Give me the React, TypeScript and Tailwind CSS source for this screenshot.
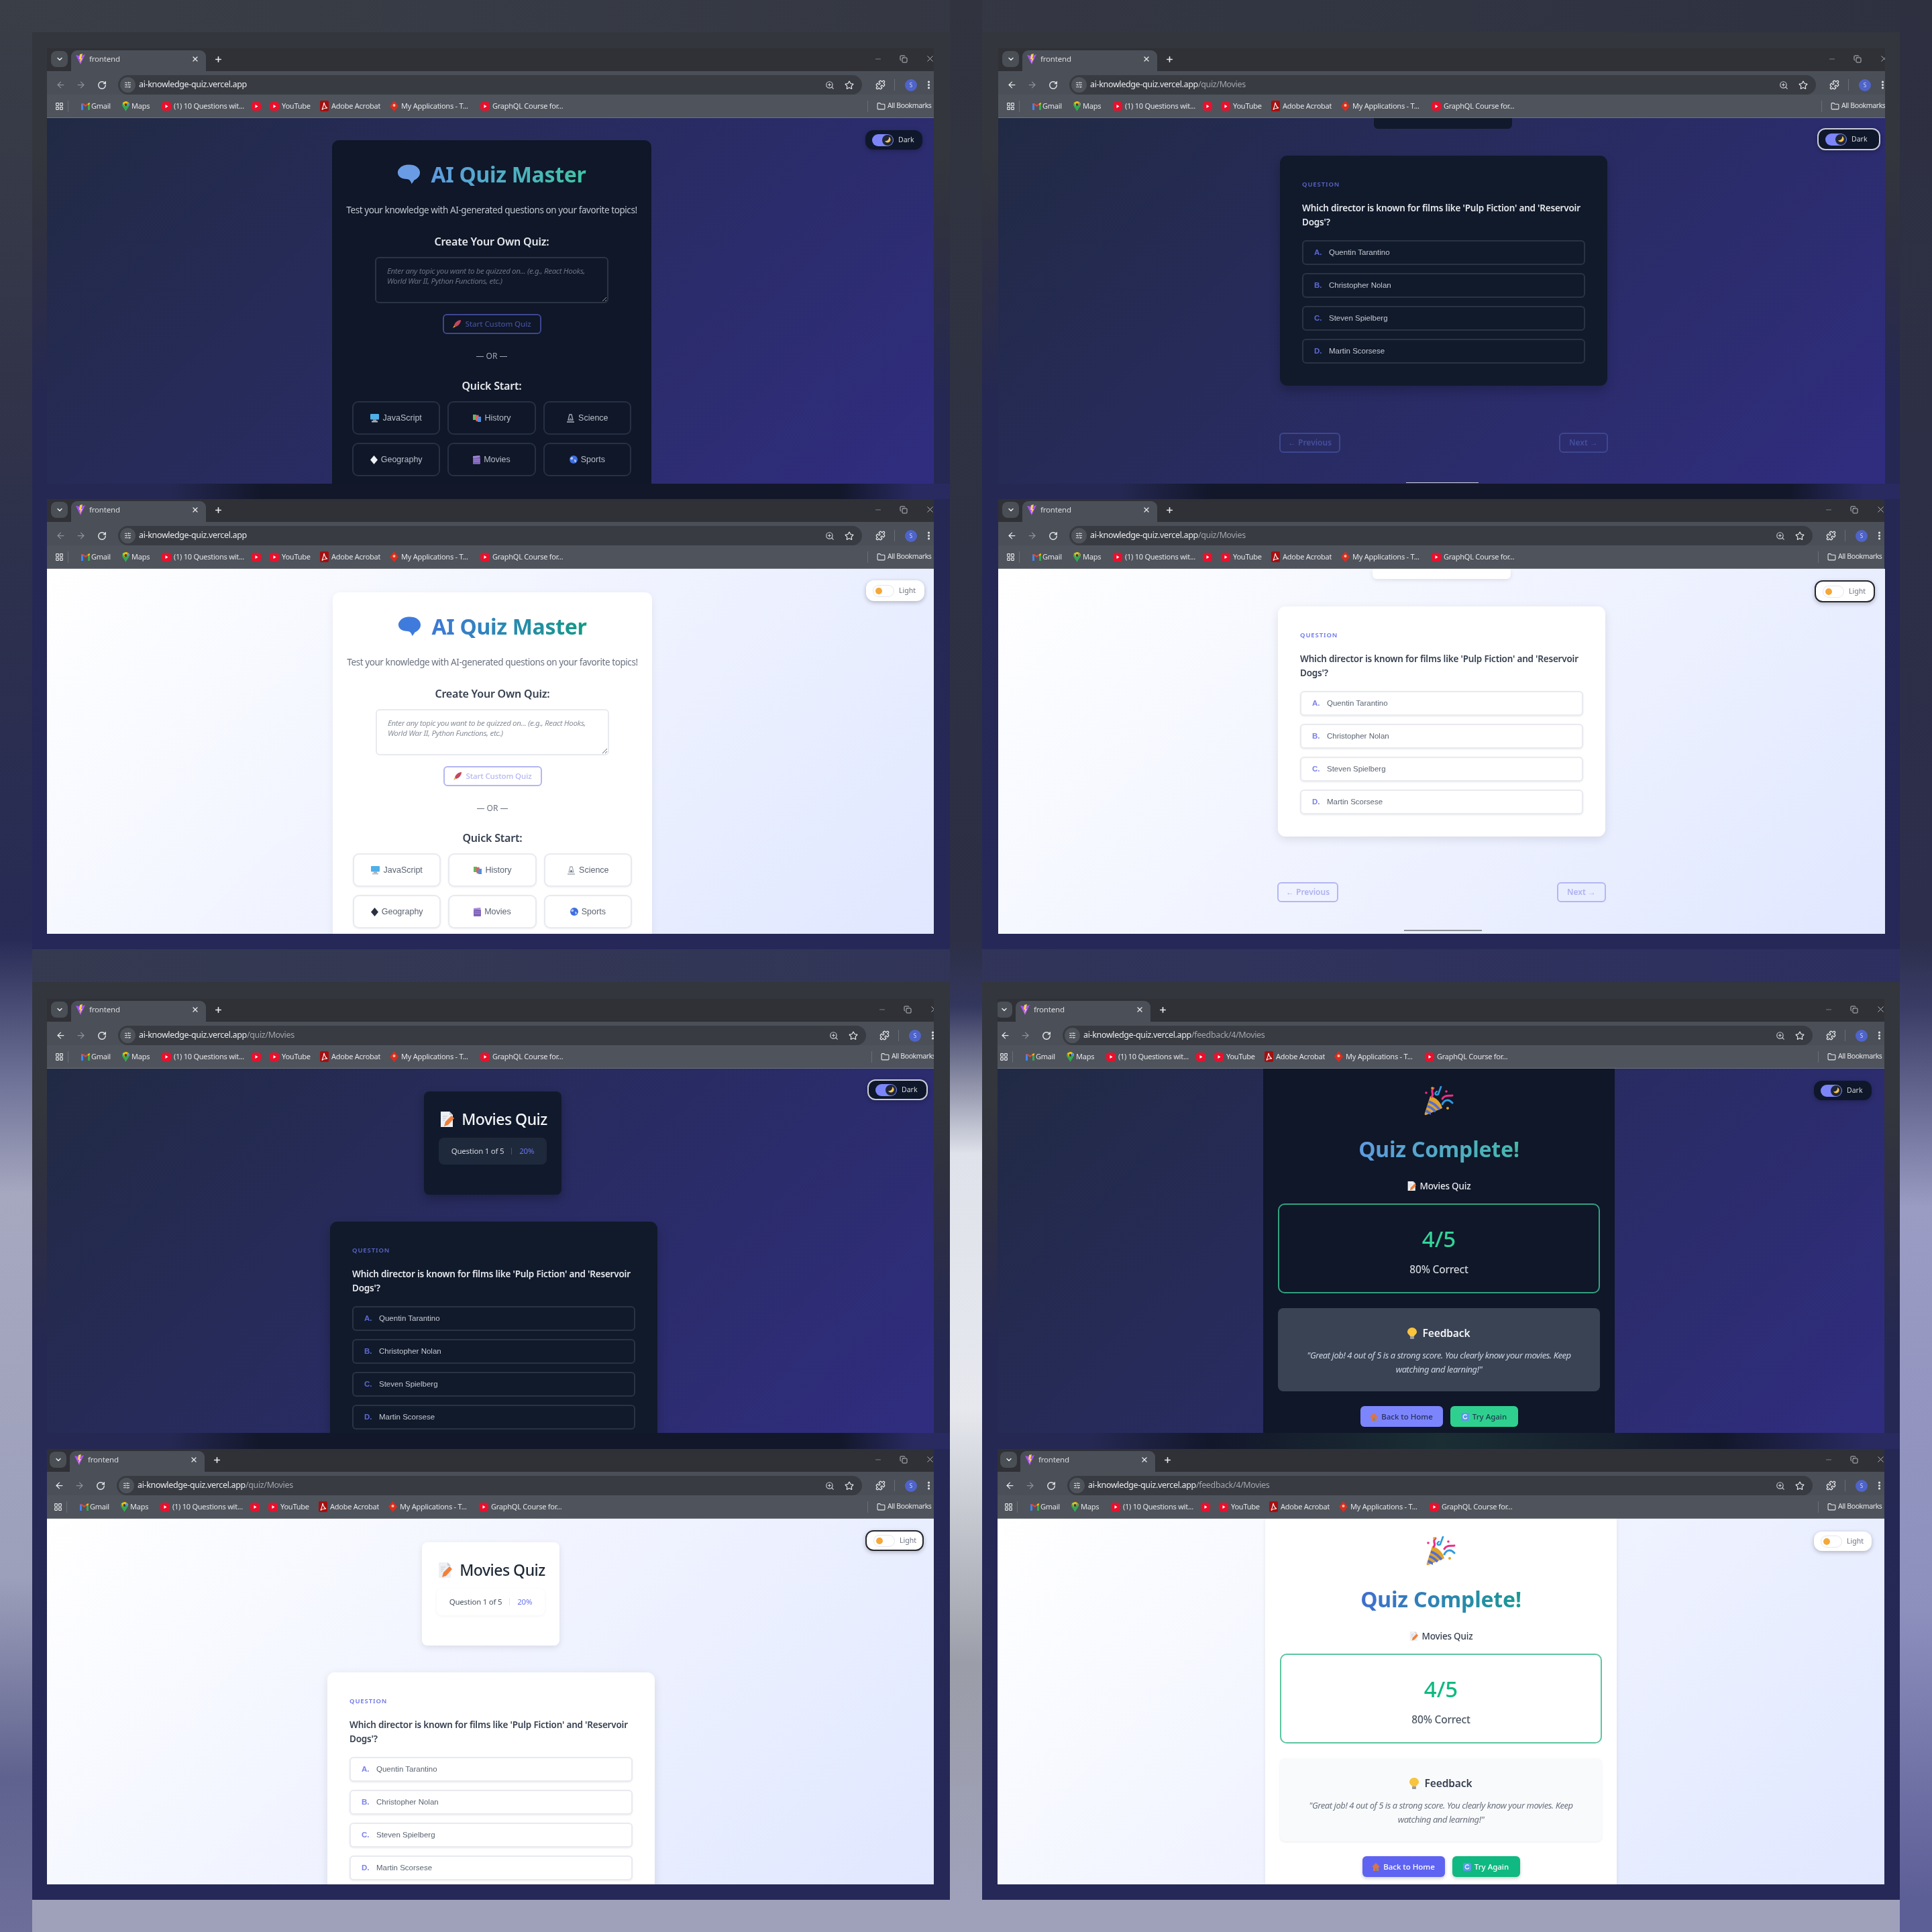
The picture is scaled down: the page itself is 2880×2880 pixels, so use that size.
import React from "react";
import { ChevronDown, X, Plus, ArrowLeft, ArrowRight, RotateCw, ZoomIn, Star, Puzzle, EllipsisVertical, Folder, LayoutGrid, SlidersHorizontal, Minus, Copy } from "lucide-react";

const Fav = () => (
  <svg width="14" height="17" viewBox="0 0 14 17" className="shrink-0">
    <path d="M0 2 L7 3.5 L14 1 L7 16 Z" fill="#a855f7" />
    <path d="M6 1 L10 0 L8 7 L10 7 L6 14 L7 8 L5 8 Z" fill="#fcd34d" />
  </svg>
);
const Gmail = () => (
  <svg width="13" height="11" viewBox="0 0 13 11" className="shrink-0">
    <path d="M0 1 L3 3 V11 H0 Z" fill="#4285f4" />
    <path d="M13 1 L10 3 V11 H13 Z" fill="#34a853" />
    <path d="M0 1 L6.5 6 L10 3.4 V1 L6.5 3.5 L3 1 Z" fill="#ea4335" />
    <path d="M10 1 L13 0 V2 L10 4 Z" fill="#fbbc04" />
  </svg>
);
const MapsPin = () => (
  <svg width="11" height="15" viewBox="0 0 11 15" className="shrink-0">
    <path d="M5.5 0 C2 0 0 2.5 0 5 C0 8 3.5 10.5 5.5 15 C7.5 10.5 11 8 11 5 C11 2.5 9 0 5.5 0Z" fill="#34a853" />
    <path d="M5.5 0 C8 0 11 2.5 11 5 L3 7 L1 2Z" fill="#fbbc04" />
    <circle cx="5.5" cy="5" r="2" fill="#3a3d44" />
    <path d="M8 1 L11 5 L8 6Z" fill="#4285f4" />
  </svg>
);
const Yt = () => (
  <svg width="14" height="13" viewBox="0 0 14 13" className="shrink-0">
    <rect width="14" height="13" rx="4" fill="#e8112d" />
    <path d="M5.5 4 L9.5 6.5 L5.5 9Z" fill="#fff" />
  </svg>
);
const Pdf = () => (
  <svg width="13" height="16" viewBox="0 0 13 16" className="shrink-0">
    <rect width="13" height="16" rx="2" fill="#a50f0f" />
    <path d="M6 3 C7 7 8 10 11 11 C8 11 5 11.500 3 13.500 C4.500 10 5.500 7 6 3Z" fill="none" stroke="#fff" strokeWidth="1.100" />
  </svg>
);
const RedApp = () => (
  <svg width="13" height="16" viewBox="0 0 13 16" className="shrink-0">
    <path d="M6.500 0 L13 8 L6.500 16 L0 8Z" fill="#d92d20" />
    <circle cx="6.500" cy="7" r="2" fill="#f4c2a1" />
  </svg>
);
const Brain = ({ dark }: { dark: boolean }) => (
  <svg width="35" height="30" viewBox="0 0 35 30" className="shrink-0">
    <path d="M18 0.500 C11 0.500 7 2.500 4.500 5 C1.500 8 0.500 10.500 1 13.500 C1.500 17 4 19.500 8 21 C11 22 14 21.500 17 22.500 C19 23.500 20.500 25.500 21.500 29 C23.500 27 24.500 25 25.500 23.500 C30 21.500 34 18 34 12.500 C34 5 27 0.500 18 0.500Z" fill={dark ? "#6a9ce6" : "#3f7bdc"} />
  </svg>
);
const Memo = ({ big }: { big?: boolean }) => (
  <svg width={big ? 21 : 13} height={big ? 25 : 16} viewBox="0 0 21 25" className="shrink-0">
    <path d="M1 1 H14 L19 6 V24 H1 Z" fill="#eef0f4" />
    <path d="M14 1 L19 6 H14 Z" fill="#c5cad4" />
    <path d="M6 23 L8 16 L17 7 L21 11 L12 21 Z" fill="#f0803c" />
    <path d="M4 8 H11 M4 11 H9 M4 14 H7" stroke="#c5cad4" strokeWidth="1" />
  </svg>
);
const Rocket = () => (
  <svg width="14" height="14" viewBox="0 0 14 14" className="shrink-0">
    <path d="M13 1 C8 1 4 5 3 9 L5 11 C9 10 13 6 13 1Z" fill="#c2485e" />
    <path d="M3 9 L1 13 L5 11Z" fill="#e8a23c" />
  </svg>
);
const Computer = () => (
  <svg width="13" height="13" viewBox="0 0 13 13" className="shrink-0">
    <rect width="13" height="8.500" rx="1" fill="#4fb0e8" />
    <rect x="4" y="8.500" width="5" height="2" fill="#9ca3af" />
    <rect x="2" y="10.500" width="9" height="2" fill="#b8bec9" />
  </svg>
);
const Books = () => (
  <svg width="13" height="13" viewBox="0 0 13 13" className="shrink-0">
    <rect x="0" y="1" width="5" height="8" fill="#5fb95a" />
    <rect x="4" y="2" width="5" height="9" fill="#e25f5f" transform="rotate(-8 6 6)" />
    <rect x="7" y="4" width="5" height="8" fill="#4f8fe0" />
  </svg>
);
const Scope = () => (
  <svg width="13" height="13" viewBox="0 0 13 13" fill="none" className="shrink-0">
    <path d="M5 1 H8 L10 9 H3Z" stroke="#a7adb9" strokeWidth="1.300" />
    <path d="M1 12 H12" stroke="#a7adb9" strokeWidth="1.600" />
    <circle cx="6.500" cy="7.500" r="1.500" fill="#6b7280" />
  </svg>
);
const Diamond = ({ dark }: { dark: boolean }) => (
  <svg width="11" height="13" viewBox="0 0 11 13" className="shrink-0">
    <path d="M5.500 0 L11 6.500 L5.500 13 L0 6.500Z" fill={dark ? "#eef0f4" : "#2b3140"} />
  </svg>
);
const Clapper = () => (
  <svg width="11" height="13" viewBox="0 0 11 13" className="shrink-0">
    <rect y="3" width="11" height="10" rx="1" fill="#7e63b8" />
    <path d="M0 1 L10 0 L11 2.500 L0 3.500Z" fill="#a48bd8" />
    <path d="M1 6 H10 M1 8.500 H10" stroke="#a48bd8" strokeWidth="0.800" />
  </svg>
);
const Globe = () => (
  <svg width="12" height="12" viewBox="0 0 12 12" className="shrink-0">
    <circle cx="6" cy="6" r="6" fill="#3f6fe0" />
    <path d="M2 3 C4 2 6 3 5 5 C4 7 2 6 1 5Z M7 6 C9 6 11 7 9 10 C8 11 7 8 7 6Z" fill="#b8c9f5" />
  </svg>
);
const Popper = () => (
  <svg width="44" height="44" viewBox="0 0 44 44" className="shrink-0">
    <path d="M1 40 C0 42 1 44 3 43 L27 33 C25 24 18 17 9 15 Z" fill="#e0a32e" />
    <path d="M2.500 37 C6 38 9 41 10 41 M4.500 30 C10 31 15 36 17 38 M7 23 C13 25 19 30 23 35" stroke="#4f6fd8" strokeWidth="3.500" fill="none" />
    <path d="M11 16 C16 11 8 8 14 3" stroke="#ec2f86" strokeWidth="3" fill="none" strokeLinecap="round" />
    <path d="M25 1 L21 12 C18 15 14 11 19 8" stroke="#2f9be0" strokeWidth="2.600" fill="none" strokeLinecap="round" />
    <path d="M27 19 C30 13 36 15 42 14" stroke="#ec2f86" strokeWidth="3" fill="none" strokeLinecap="round" />
    <path d="M27 27 C31 19 37 20 42 25" stroke="#2f9be0" strokeWidth="3" fill="none" strokeLinecap="round" />
    <circle cx="12" cy="3" r="1.800" fill="#e0a32e" />
    <circle cx="3" cy="10" r="1.800" fill="#ec2f86" />
    <circle cx="33" cy="8" r="1.800" fill="#ec2f86" />
    <circle cx="35" cy="33" r="2" fill="#e0a32e" />
  </svg>
);
const Bulb = () => (
  <svg width="14" height="18" viewBox="0 0 14 18" className="shrink-0">
    <path d="M7 0 C3 0 0 3 0 6.500 C0 9.500 3 10.500 4 13 H10 C11 10.500 14 9.500 14 6.500 C14 3 11 0 7 0Z" fill="#f9c33c" />
    <rect x="4" y="13" width="6" height="4" rx="1" fill="#9a9ca3" />
  </svg>
);
const House = () => (
  <svg width="12" height="12" viewBox="0 0 12 12" className="shrink-0">
    <path d="M6 0 L12 6 H10 V12 H2 V6 H0Z" fill="#d8744e" />
    <rect x="5" y="8" width="2.500" height="4" fill="#7a8b6b" />
  </svg>
);
const Refresh = () => (
  <svg width="12" height="12" viewBox="0 0 12 12" fill="none" className="shrink-0">
    <rect width="12" height="12" rx="2" fill="#5a9be8" />
    <path d="M8.500 4 A3 3 0 1 0 9 7" stroke="#fff" strokeWidth="1.200" />
  </svg>
);

const BMText = ({ children }: { children: React.ReactNode }) => (
  <span className="truncate text-[11px] tracking-[-0.25px] text-[#e1e3e6]">{children}</span>
);

function Chrome({ url, path, inner }: { url: string; path?: string; inner: string }) {
  return (
    <div className={`font-['Noto_Sans',sans-serif] ${inner}`}>
      <div className="flex h-[34px] items-end bg-[#2f3137] pl-[6px]">
        <div className="mb-[6px] flex h-[24px] w-[25px] items-center justify-center rounded-[8px] bg-[#4a4e55] text-[#e8eaed]">
          <ChevronDown size={12} strokeWidth={3} />
        </div>
        <div className="ml-[5px] flex h-[31px] w-[201px] items-center rounded-t-[9px] bg-[#4b4f57] pb-[5px] pl-[7px] pr-[10px]">
          <Fav />
          <span className="ml-[6px] text-[11.500px] tracking-[-0.2px] text-[#d8dade]">frontend</span>
          <X size={12} strokeWidth={2.500} className="ml-auto text-[#e8eaed]" />
        </div>
        <Plus size={13} strokeWidth={3} className="mb-[11px] ml-[12px] text-[#e8eaed]" />
        <div className="mb-[11px] -mr-[2px] ml-auto flex items-center gap-[26px] text-[#b9bcc2]">
          <Minus size={12} className="text-[#7b7e85]" />
          <Copy size={12} />
          <X size={15} strokeWidth={1.500} />
        </div>
      </div>
      <div className="flex h-[35px] items-center bg-[#4b4f57] pl-[13px] pt-[6px]">
        <ArrowLeft size={15} className={path ? "text-[#e8eaed]" : "text-[#8d9096]"} />
        <ArrowRight size={15} className="ml-[15px] text-[#8d9096]" />
        <RotateCw size={14} strokeWidth={2.400} className="ml-[17px] text-[#e8eaed]" />
        <div className="ml-[17px] flex h-[29px] min-w-0 flex-1 items-center rounded-full bg-[#383b41] pl-[3px] pr-[12px]">
          <div className="flex h-[23px] w-[23px] items-center justify-center rounded-full bg-[#4e5259] text-[#e8eaed]">
            <SlidersHorizontal size={11} />
          </div>
          <span className="ml-[5px] text-[12.500px] tracking-[-0.35px] text-[#e8eaed]">{url}<span className="text-[#a2a6ac]">{path}</span></span>
          <ZoomIn size={14} className="ml-auto text-[#c9ccd1]" />
          <Star size={14} className="ml-[15px] text-[#e8eaed]" />
        </div>
        <Puzzle size={15} className="ml-[20px] text-[#e8eaed]" />
        <div className="ml-[13px] h-[17px] w-[1px] bg-[#6a6e75]" />
        <div className="ml-[15px] flex h-[18px] w-[18px] items-center justify-center rounded-full bg-[#4f64c9] text-[8px] text-[#cfd6f5]">S</div>
        <EllipsisVertical size={15} strokeWidth={3} className="ml-[10px] text-[#e8eaed]" />
      </div>
      <div className="flex h-[35px] items-center border-b border-[#6f7379] bg-[#4f535b] pl-[12px]">
        <LayoutGrid size={13} className="text-[#e8eaed]" />
        <div className="ml-[6px] mr-[19px] h-[17px] w-[1px] bg-[#6a6e75]" />
        <div className="flex w-[61px] items-center gap-[2px]"><Gmail /><BMText>Gmail</BMText></div>
        <div className="flex w-[59px] items-center gap-[3px]"><MapsPin /><BMText>Maps</BMText></div>
        <div className="flex w-[134px] items-center gap-[4px]"><Yt /><BMText>(1) 10 Questions wit...</BMText></div>
        <div className="flex w-[27px] items-center"><Yt /></div>
        <div className="flex w-[75px] items-center gap-[4px]"><Yt /><BMText>YouTube</BMText></div>
        <div className="flex w-[104px] items-center gap-[4px]"><Pdf /><BMText>Adobe Acrobat</BMText></div>
        <div className="flex w-[135px] items-center gap-[4px]"><RedApp /><BMText>My Applications - T...</BMText></div>
        <div className="flex w-[130px] items-center gap-[4px]"><Yt /><BMText>GraphQL Course for...</BMText></div>
        <div className="ml-auto flex w-[99px] shrink-0 items-center overflow-hidden">
          <div className="mr-[13px] h-[17px] w-[1px] shrink-0 bg-[#6a6e75]" />
          <Folder size={13} className="mr-[3px] shrink-0 text-[#e8eaed]" />
          <span className="whitespace-nowrap text-[10.500px] tracking-[-0.4px] text-[#e1e3e6]">All Bookmarks</span>
        </div>
      </div>
    </div>
  );
}

function Toggle({ dark, pos, ring }: { dark: boolean; pos: string; ring?: boolean }) {
  return (
    <div
      className={`absolute flex items-center gap-[7px] rounded-[12px] pl-[10px] font-['Noto_Sans',sans-serif] shadow-[0_2px_6px_rgba(0,0,0,0.25)] ${pos} ${dark ? "bg-[#0f172a] text-[#d1d5db]" : "bg-white text-[#6b7280]"} ${ring ? (dark ? "border-2 border-[#c9cdd8]" : "border-2 border-[#26282e]") : ""}`}
    >
      {dark ? (
        <div className="flex h-[18px] w-[32px] items-center justify-end rounded-full bg-[#7c85f8] pr-[1px]">
          <div className="flex h-[16px] w-[16px] items-center justify-center rounded-full bg-[#1e2638]">
            <svg width="9" height="9" viewBox="0 0 9 9"><path d="M6 0 A4.500 4.500 0 1 1 0 6 A5 5 0 0 0 6 0Z" fill="#f6c453" /></svg>
          </div>
        </div>
      ) : (
        <div className="flex h-[18px] w-[32px] items-center rounded-full border border-[#e5e7eb] bg-white pl-[3px]">
          <div className="h-[10px] w-[10px] rounded-full bg-[#f4a83a]" />
        </div>
      )}
      <span className="text-[10.500px] leading-none">{dark ? "Dark" : "Light"}</span>
    </div>
  );
}

function Home({ dark, card }: { dark: boolean; card: string }) {
  const btn = `flex h-[50px] items-center justify-center gap-[5px] rounded-[9px] border-2 font-['Liberation_Sans',sans-serif] text-[12.500px] ${dark ? "border-[#273044] text-[#b9bfca]" : "border-[#e8eaf0] bg-white text-[#5b6472] shadow-[0_1px_3px_rgba(0,0,0,0.06)]"}`;
  return (
    <div className={`w-[476px] rounded-[10px] pt-[33px] text-center font-['Noto_Sans',sans-serif] ${card} ${dark ? "bg-[#0f1728]" : "bg-white shadow-[0_4px_14px_rgba(0,0,0,0.06)]"}`}>
      <div className="flex h-[36px] items-center justify-center gap-[15px]">
        <Brain dark={dark} />
        <h1 className={`whitespace-nowrap bg-clip-text text-[32px] font-bold leading-[36px] tracking-[-0.3px] text-transparent ${dark ? "bg-[linear-gradient(90deg,#5f9be0,#3fc4a4)]" : "bg-[linear-gradient(90deg,#3f78d8,#149a86)]"}`}>AI Quiz Master</h1>
      </div>
      <p className={`mt-[25px] whitespace-nowrap text-[13.500px] leading-[20px] tracking-[-0.42px] ${dark ? "text-[#c0c6d0]" : "text-[#6b7280]"}`}>Test your knowledge with AI-generated questions on your favorite topics!</p>
      <h2 className={`mt-[26px] text-[16px] font-semibold leading-[22px] tracking-[-0.2px] ${dark ? "text-[#e5e7eb]" : "text-[#374151]"}`}>Create Your Own Quiz:</h2>
      <textarea
        rows={3}
        placeholder="Enter any topic you want to be quizzed on... (e.g., React Hooks, World War II, Python Functions, etc.)"
        className={`mx-auto mt-[12px] block h-[69px] w-[348px] resize-y rounded-[6px] border-2 bg-transparent py-[12px] pl-[16px] pr-[30px] text-[11.500px] leading-[14.500px] tracking-[-0.35px] outline-none placeholder:italic ${dark ? "border-[#2b3445] placeholder:text-[#6b7280]" : "border-[#e8eaf0] bg-white placeholder:text-[#8a919c]"}`}
      />
      <button className={`mx-auto mt-[16px] flex h-[30px] w-[147px] items-center justify-center gap-[5px] rounded-[6px] border-2 text-[11.500px] font-medium tracking-[-0.1px] ${dark ? "border-[#3d478f] text-[#434e96]" : "border-[#b4b7f2] text-[#b4b7f2]"}`}>
        <Rocket />Start Custom Quiz
      </button>
      <div className={`mt-[24px] text-[12px] leading-[18px] ${dark ? "text-[#a1a7b2]" : "text-[#6b7280]"}`}>— OR —</div>
      <h2 className={`mt-[24px] text-[16px] font-semibold leading-[22px] tracking-[-0.2px] ${dark ? "text-[#e5e7eb]" : "text-[#374151]"}`}>Quick Start:</h2>
      <div className="mt-[12px] grid grid-cols-3 gap-x-[11px] gap-y-[12px] px-[30px] pb-[30px]">
        <button className={btn}><Computer />JavaScript</button>
        <button className={btn}><Books />History</button>
        <button className={btn}><Scope />Science</button>
        <button className={btn}><Diamond dark={dark} />Geography</button>
        <button className={btn}><Clapper />Movies</button>
        <button className={btn}><Globe />Sports</button>
      </div>
    </div>
  );
}

function HeaderCard({ dark, pos }: { dark: boolean; pos: string }) {
  return (
    <div className={`h-[154px] w-[205px] rounded-[8px] pt-[25px] font-['Noto_Sans',sans-serif] ${pos} ${dark ? "bg-[#111a2c] shadow-[0_6px_14px_rgba(0,0,0,0.25)]" : "bg-white shadow-[0_3px_10px_rgba(0,0,0,0.1)]"}`}>
      <div className="flex h-[32px] items-center justify-center gap-[11px] pl-[3px]">
        <Memo big />
        <h1 className={`whitespace-nowrap text-[23px] font-medium leading-[32px] tracking-[-0.5px] ${dark ? "text-[#f3f4f6]" : "text-[#1f2937]"}`}>Movies Quiz</h1>
      </div>
      <div className={`mx-auto mt-[12px] flex h-[40px] w-[161px] items-center justify-center gap-[11px] rounded-[8px] text-[11.500px] tracking-[-0.25px] ${dark ? "bg-[#1e293b] text-[#d1d5db]" : "bg-white text-[#4b5563] shadow-[0_1px_4px_rgba(0,0,0,0.05)]"}`}>
        <span>Question 1 of 5</span>
        <span className={`h-[10px] w-[1px] ${dark ? "bg-[#475569]" : "bg-[#e5e7eb]"}`} />
        <span className="text-[#6a74f0]">20%</span>
      </div>
    </div>
  );
}

function QuestionCard({ dark, pos }: { dark: boolean; pos: string }) {
  const opts = [["A.", "Quentin Tarantino"], ["B.", "Christopher Nolan"], ["C.", "Steven Spielberg"], ["D.", "Martin Scorsese"]];
  return (
    <div className={`w-[488px] rounded-[11px] px-[33px] pb-[33px] pt-[36px] font-['Noto_Sans',sans-serif] ${pos} ${dark ? "bg-[#111a2b] shadow-[0_8px_16px_rgba(0,0,0,0.22)]" : "bg-white shadow-[0_4px_14px_rgba(0,0,0,0.1)]"}`}>
      <div className={`text-[9.500px] font-semibold leading-[14px] tracking-[0.9px] ${dark ? "text-[#5a66cc]" : "text-[#6a74e8]"}`}>QUESTION</div>
      <div className={`mt-[18px] text-[13.500px] font-semibold leading-[21px] tracking-[-0.2px] ${dark ? "text-[#e5e7eb]" : "text-[#374151]"}`}>Which director is known for films like 'Pulp Fiction' and 'Reservoir Dogs'?</div>
      <div className="mt-[16px] flex flex-col gap-[12px]">
        {opts.map(([l, t]) => (
          <div key={l} className={`flex h-[37px] items-center rounded-[6px] border-2 pl-[16px] font-['Liberation_Sans',sans-serif] text-[11.500px] ${dark ? "border-[#2a3344] text-[#c4c9d2]" : "border-[#e8eaf0] bg-white text-[#5b6472] shadow-[0_1px_3px_rgba(0,0,0,0.08)]"}`}>
            <span className={`w-[22px] font-bold ${dark ? "text-[#5d68d6]" : "text-[#7b82e8]"}`}>{l}</span>
            <span>{t}</span>
          </div>
        ))}
      </div>
    </div>
  );
}

function Nav({ dark, pos }: { dark: boolean; pos: string }) {
  const c = `flex h-[30px] items-center justify-center rounded-[6px] border-2 text-[12px] font-semibold ${dark ? "border-[#3d478f] text-[#454f9c]" : "border-[#b4b7f2] text-[#aeb1f0]"}`;
  return (
    <div className={`flex w-[490px] justify-between font-['Noto_Sans',sans-serif] ${pos}`}>
      <button className={`${c} w-[91px]`}>← Previous</button>
      <button className={`${c} w-[73px]`}>Next →</button>
    </div>
  );
}

function Feedback({ dark, pos }: { dark: boolean; pos: string }) {
  return (
    <div className={`flex h-full w-[524px] flex-col items-center px-[22px] pt-[26px] text-center font-['Noto_Sans',sans-serif] ${pos} ${dark ? "bg-[#0f1728]" : "bg-white shadow-[0_0_6px_rgba(0,0,0,0.08)]"}`}>
      <Popper />
      <h1 className={`mt-[28px] bg-clip-text text-[32px] font-bold leading-[44px] tracking-[-0.2px] text-transparent ${dark ? "bg-[linear-gradient(90deg,#5f9be0,#45b8ac)]" : "bg-[linear-gradient(90deg,#3f6fd0,#1a9a94)]"}`}>Quiz Complete!</h1>
      <div className={`mt-[23px] flex h-[20px] items-center gap-[6px] text-[13.500px] font-medium tracking-[-0.2px] ${dark ? "text-[#e5e7eb]" : "text-[#374151]"}`}><Memo />Movies Quiz</div>
      <div className={`mt-[16px] h-[134px] w-full rounded-[10px] border-2 pt-[26px] ${dark ? "border-[#34a07f]" : "border-[#5cc6a0]"}`}>
        <div className={`text-[33px] font-medium leading-[50px] ${dark ? "text-[#34d399]" : "text-[#10b981]"}`}>4/5</div>
        <div className={`mt-[8px] text-[15.500px] font-medium leading-[24px] tracking-[-0.2px] ${dark ? "text-[#d1d5db]" : "text-[#4b5563]"}`}>80% Correct</div>
      </div>
      <div className={`mt-[22px] h-[124px] w-full rounded-[8px] pt-[26px] ${dark ? "bg-[#3a4354]" : "bg-[#f9fafb] shadow-[0_1px_3px_rgba(0,0,0,0.08)]"}`}>
        <div className={`flex h-[23px] items-center justify-center gap-[8px] text-[15.500px] font-semibold tracking-[-0.1px] ${dark ? "text-[#f3f4f6]" : "text-[#374151]"}`}><Bulb />Feedback</div>
        <p className={`mx-auto mt-[11px] w-[420px] text-[13px] italic leading-[21px] tracking-[-0.45px] ${dark ? "text-[#cbd5e1]" : "text-[#6b7280]"}`}>"Great job! 4 out of 5 is a strong score. You clearly know your movies. Keep watching and learning!"</p>
      </div>
      <div className="mt-[22px] flex gap-[11px]">
        <button className={`flex h-[31px] w-[123px] items-center justify-center gap-[5px] rounded-[6px] text-[11.500px] font-medium ${dark ? "bg-[#7c85fb] text-[#272f5e]" : "bg-[#5f63f2] text-white shadow-[0_2px_5px_rgba(0,0,0,0.2)]"}`}><House />Back to Home</button>
        <button className={`flex h-[31px] w-[101px] items-center justify-center gap-[5px] rounded-[6px] text-[11.500px] font-medium ${dark ? "bg-[#2fd08f] text-[#1d3a4d]" : "bg-[#10b981] text-white shadow-[0_2px_5px_rgba(0,0,0,0.2)]"}`}><Refresh />Try Again</button>
      </div>
    </div>
  );
}

function Browser({ url, path, inner, h, dark, children }: { url: string; path?: string; inner: string; h: string; dark: boolean; children: React.ReactNode }) {
  return (
    <div className="w-[1322px] overflow-hidden">
      <Chrome url={url} path={path} inner={inner} />
      <div className={`relative overflow-hidden ${h} ${dark ? "bg-[linear-gradient(135deg,#212a44,#302d80)]" : "bg-[linear-gradient(135deg,#ffffff,#e0e7ff)]"}`}>{children}</div>
    </div>
  );
}

const U = "ai-knowledge-quiz.vercel.app";
const panelBg = "bg-[linear-gradient(180deg,#33363c_0,#33363c_180px,#2f3040_300px,#252852_540px,#262858_100%)]";
const Band = ({ cls }: { cls: string }) => <div className={cls} />;

export default function App() {
  return (
    <div className="h-[2880px] w-[2880px] overflow-hidden blur-[0.4px] [background:linear-gradient(180deg,#31343f_0,#2c2f45_1400px,#34375e_1500px,#dfe2ea_1720px,#e6e8ee_2100px,#9b9da8_2480px,#9fa1bb_2840px,#9fa1bb_100%)_1416px_0/48px_100%_no-repeat,linear-gradient(180deg,#2e3040_0,#2c2e4c_1400px,#3a3c66_1500px,#9a9cc4_1800px,#8d8fbd_2400px,#5c5e96_2830px,#5c5e96_100%)_2832px_0/48px_100%_no-repeat,linear-gradient(180deg,#3a3e46_0,#2f324a_700px,#272b55_1400px,#6b6f95_1600px,#a6a8c0_1780px,#9da0bb_2350px,#5f628e_2650px,#6d6f9a_100%)_0_0/48px_100%_no-repeat,linear-gradient(90deg,#3a3e46,#2e3140)_0_0/100%_48px_no-repeat,linear-gradient(90deg,#353a50,#2d2f60)_0_1415px/100%_49px_no-repeat,#9fa1bb]">
      <div className="grid grid-cols-[1368px_1368px] gap-x-[48px] gap-y-[49px] pl-[48px] pt-[48px]">
        <section className={`h-[1367px] pl-[22px] pt-[24px] ${panelBg}`}>
          <Browser url={U} inner="w-[1322px]" h="h-[545px]" dark>
            <div className="flex pl-[425px] pt-[33px]"><Home dark card="" /></div>
            <Toggle dark pos="right-[17px] top-[18px] h-[29px] w-[85px]" />
          </Browser>
          <Band cls="-ml-[22px] h-[23px] w-[1368px] bg-[linear-gradient(90deg,#252852_15%,#13172a_25%,#13172a_88%,#282a60_96%)]" />
          <Browser url={U} inner="w-[1322px]" h="h-[544px]" dark={false}>
            <div className="flex pl-[426px] pt-[35px]"><Home dark={false} card="" /></div>
            <Toggle dark={false} pos="right-[14px] top-[17px] h-[31px] w-[87px]" />
          </Browser>
        </section>

        <section className={`h-[1367px] pl-[24px] pt-[24px] ${panelBg}`}>
          <Browser url={U} path="/quiz/Movies" inner="w-[1326px]" h="h-[545px]" dark>
            <div className="h-[16px] w-[206px] rounded-b-[6px] bg-[#111a2c] ml-[560px]" />
            <QuestionCard dark pos="ml-[420px] mt-[40px]" />
            <Nav dark pos="ml-[419px] mt-[70px]" />
            <div className="ml-[608px] mt-[44px] h-[1px] w-[108px] bg-[#c9ccd6]" />
            <Toggle dark ring pos="right-[7px] top-[15px] h-[33px] w-[94px]" />
          </Browser>
          <Band cls="-ml-[24px] h-[23px] w-[1368px] bg-[linear-gradient(90deg,#252852_15%,#13172a_25%,#13172a_88%,#282a60_96%)]" />
          <Browser url={U} path="/quiz/Movies" inner="w-[1321px]" h="h-[544px]" dark={false}>
            <div className="h-[15px] w-[206px] rounded-b-[6px] bg-white ml-[558px] shadow-[0_2px_6px_rgba(0,0,0,0.1)]" />
            <QuestionCard dark={false} pos="ml-[417px] mt-[41px]" />
            <Nav dark={false} pos="ml-[416px] mt-[68px]" />
            <div className="ml-[605px] mt-[41px] h-[2px] w-[116px] bg-[#8b8f9a]" />
            <Toggle dark={false} ring pos="right-[15px] top-[17px] h-[33px] w-[90px]" />
          </Browser>
        </section>

        <section className={`h-[1368px] pl-[22px] pt-[25px] ${panelBg}`}>
          <Browser url={U} path="/quiz/Movies" inner="w-[1328px]" h="h-[543px]" dark>
            <HeaderCard dark pos="ml-[562px] mt-[34px]" />
            <QuestionCard dark pos="ml-[422px] mt-[40px]" />
            <Toggle dark ring pos="right-[9px] top-[16px] h-[31px] w-[90px]" />
          </Browser>
          <Band cls="-ml-[22px] h-[24px] w-[1368px] bg-[linear-gradient(90deg,#252852_15%,#13172a_25%,#13172a_88%,#282a60_96%)]" />
          <Browser url={U} path="/quiz/Movies" inner="-ml-[2px] w-[1324px]" h="h-[545px]" dark={false}>
            <HeaderCard dark={false} pos="ml-[559px] mt-[35px]" />
            <QuestionCard dark={false} pos="ml-[418px] mt-[40px]" />
            <Toggle dark={false} ring pos="right-[15px] top-[17px] h-[31px] w-[87px]" />
          </Browser>
        </section>

        <section className={`h-[1368px] pl-[23px] pt-[25px] ${panelBg}`}>
          <Browser url={U} path="/feedback/4/Movies" inner="-ml-[9px] w-[1331px]" h="h-[543px]" dark>
            <Feedback dark pos="ml-[396px]" />
            <Toggle dark pos="right-[19px] top-[18px] h-[29px] w-[86px]" />
          </Browser>
          <Band cls="-ml-[23px] h-[24px] w-[1368px] bg-[linear-gradient(90deg,#252852_12%,#13172a_25%,#1a2e34_50%,#13172a_80%,#282a60_96%)]" />
          <Browser url={U} path="/feedback/4/Movies" inner="-ml-[2px] w-[1324px]" h="h-[545px]" dark={false}>
            <Feedback dark={false} pos="ml-[399px]" />
            <Toggle dark={false} pos="right-[19px] top-[19px] h-[29px] w-[86px]" />
          </Browser>
        </section>
      </div>
    </div>
  );
}
